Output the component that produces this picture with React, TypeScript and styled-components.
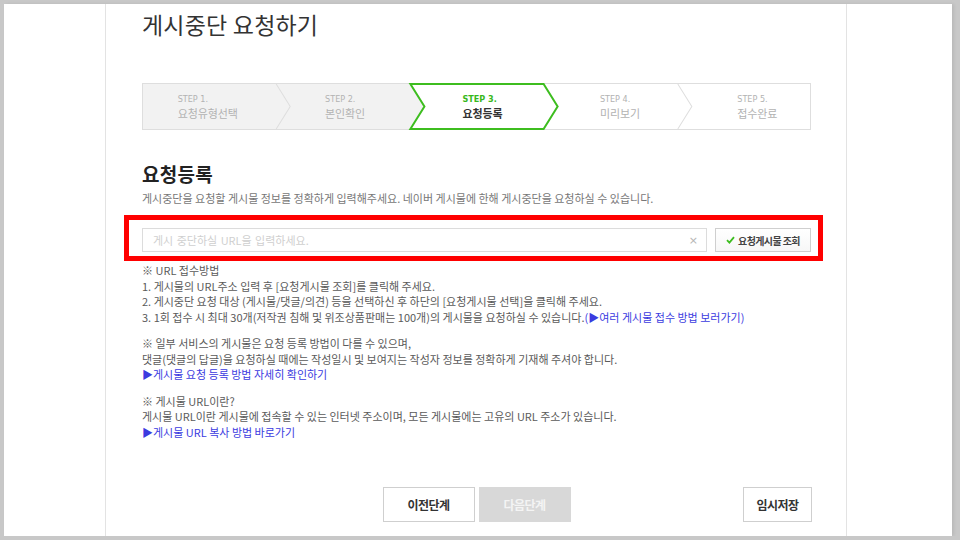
import React from "react";
import styled, { createGlobalStyle } from "styled-components";

const GlobalStyle = createGlobalStyle`
  html, body { margin: 0; padding: 0; }
  body {
    background: #c8c8c8;
    font-family: "Noto Sans CJK KR", "Noto Sans", sans-serif;
    overflow: hidden;
  }
  * { box-sizing: border-box; }
`;

const Frame = styled.div`
  margin: 4px 8px 0 4px;
  height: 532px;
  background: #fff;
  overflow: hidden;
  box-shadow: 2px 0 3px rgba(0, 0, 0, 0.08);
`;

const Column = styled.div`
  margin-left: 101px;
  width: 742px;
  height: 100%;
  border-left: 1px solid #e3e3e3;
  border-right: 1px solid #e3e3e3;
  padding: 6px 35px 0 36px;
  display: flex;
  flex-direction: column;
`;

const Title = styled.h1`
  margin: 0;
  font-size: 23px;
  line-height: 28px;
  font-weight: 400;
  color: #333;
  letter-spacing: 0.2px;
`;

const StepBar = styled.div`
  position: relative;
  margin-top: 45px;
  height: 47px;
  display: flex;
`;

const StepArt = styled.svg`
  position: absolute;
  inset: 0;
  width: 100%;
  height: 100%;
  overflow: visible;
`;

const Step = styled.div<{ $first?: boolean }>`
  position: relative;
  flex: 1;
  display: flex;
  align-items: center;
  justify-content: center;
  padding-left: ${(p) => (p.$first ? "12px" : "30px")};
`;

const StepText = styled.div`
  display: flex;
  flex-direction: column;
  align-items: flex-start;
`;

const StepNum = styled.span<{ $active?: boolean }>`
  font-family: "Liberation Sans Narrow", "DejaVu Sans Condensed", "Roboto", sans-serif;
  font-stretch: condensed;
  font-size: 9px;
  line-height: 12px;
  font-weight: ${(p) => (p.$active ? 700 : 400)};
  color: ${(p) => (p.$active ? "#38b81c" : "#b2b2b2")};
`;

const StepLabel = styled.span<{ $active?: boolean }>`
  font-size: 11px;
  line-height: 16px;
  letter-spacing: -0.1px;
  font-weight: ${(p) => (p.$active ? 700 : 400)};
  color: ${(p) => (p.$active ? "#333" : "#b2b2b2")};
`;

const Heading = styled.h2`
  margin: 32px 0 0;
  font-size: 19px;
  line-height: 24px;
  font-weight: 700;
  color: #222;
  letter-spacing: 0.3px;
`;

const Desc = styled.p`
  margin: 4px 0 0;
  font-size: 11px;
  line-height: 16px;
  color: #777;
  letter-spacing: 0;
`;

const Highlight = styled.div`
  margin: 9px -12px 0 -18px;
  border: 5px solid #ff0000;
  padding: 8px 7px 4px 13px;
  display: flex;
  gap: 8px;
`;

const InputBox = styled.div`
  flex: 1;
  height: 24px;
  border: 1px solid #dcdcdc;
  display: flex;
  align-items: center;
  padding: 0 8px 0 10px;
`;

const Placeholder = styled.span`
  flex: 1;
  font-size: 11px;
  color: #cfcfcf;
  letter-spacing: 0;
  word-spacing: 1px;
`;

const Clear = styled.span`
  font-family: "DejaVu Sans", sans-serif;
  font-size: 11px;
  color: #b5b5b5;
`;

const SearchButton = styled.button`
  width: 96px;
  height: 24px;
  border: 1px solid #cfcfcf;
  background: linear-gradient(#fff, #f7f7f7);
  display: flex;
  align-items: center;
  justify-content: center;
  gap: 3px;
  padding: 0;
  font-family: "Noto Sans CJK KR", sans-serif;
  font-size: 10px;
  font-weight: 700;
  letter-spacing: -0.6px;
  color: #444;
`;

const Info = styled.div`
  margin-top: 2px;
  display: flex;
  flex-direction: column;
  gap: 11px;
`;

const Para = styled.p`
  margin: 0;
  font-size: 11px;
  line-height: 15.5px;
  color: #5a5a5a;
  letter-spacing: 0;
`;

const Line = styled.span`
  display: block;
  white-space: nowrap;
`;

const Link = styled.a`
  color: #3b3bdf;
  text-decoration: none;
`;

const Footer = styled.div`
  margin-top: auto;
  margin-bottom: 14px;
  display: grid;
  grid-template-columns: 1fr auto 1fr;
  align-items: center;
`;

const Center = styled.div`
  grid-column: 2;
  display: flex;
  gap: 4px;
`;

const Btn = styled.button<{ $variant?: "primary" | "disabled" }>`
  width: ${(p) => (p.$variant === "primary" ? "69px" : "92px")};
  height: 35px;
  padding: 0;
  font-family: "Noto Sans CJK KR", sans-serif;
  font-size: 12px;
  font-weight: 700;
  letter-spacing: -0.5px;
  border: 1px solid ${(p) => (p.$variant === "disabled" ? "#d8d8d8" : "#cfcfcf")};
  background: ${(p) => (p.$variant === "disabled" ? "#d8d8d8" : "#fff")};
  color: ${(p) => (p.$variant === "disabled" ? "#f4f4f4" : "#333")};
`;

const Right = styled.div`
  grid-column: 3;
  justify-self: end;
  margin-right: -1px;
`;

const steps = [
  { num: "STEP 1.", label: "요청유형선택" },
  { num: "STEP 2.", label: "본인확인" },
  { num: "STEP 3.", label: "요청등록", active: true },
  { num: "STEP 4.", label: "미리보기" },
  { num: "STEP 5.", label: "접수완료" },
];

function StepBackground() {
  const w = 668;
  const h = 47;
  const m = h / 2;
  return (
    <StepArt viewBox={`0 0 ${w} ${h}`} preserveAspectRatio="none">
      <rect x="0.5" y="0.5" width={w - 1} height={h - 1} fill="#fff" stroke="#dedede" />
      <polygon points={`1,1 267,1 281,${m} 267,${h - 1} 1,${h - 1}`} fill="#f2f2f2" />
      <polyline points={`134,1 148,${m} 134,${h - 1}`} fill="none" stroke="#dedede" />
      <polyline points={`535,1 549,${m} 535,${h - 1}`} fill="none" stroke="#dedede" />
      <polygon
        points={`268,1 401,1 415,${m} 401,${h - 1} 268,${h - 1} 282,${m}`}
        fill="#fff"
        stroke="#3dbd1f"
        strokeWidth="2"
        strokeLinejoin="miter"
      />
    </StepArt>
  );
}

function CheckIcon() {
  return (
    <svg width="9" height="8" viewBox="0 0 9 8">
      <path d="M1 4.2 L3.4 6.6 L8 1.2" fill="none" stroke="#3dbd1f" strokeWidth="1.8" />
    </svg>
  );
}

export default function App() {
  return (
    <>
      <GlobalStyle />
      <Frame>
        <Column>
          <Title>게시중단 요청하기</Title>
          <StepBar>
            <StepBackground />
            {steps.map((s, i) => (
              <Step key={s.num} $first={i === 0}>
                <StepText>
                  <StepNum $active={s.active}>{s.num}</StepNum>
                  <StepLabel $active={s.active}>{s.label}</StepLabel>
                </StepText>
              </Step>
            ))}
          </StepBar>
          <Heading>요청등록</Heading>
          <Desc>
            게시중단을 요청할 게시물 정보를 정확하게 입력해주세요. 네이버 게시물에 한해 게시중단을 요청하실 수 있습니다.
          </Desc>
          <Highlight>
            <InputBox>
              <Placeholder>게시 중단하실 URL을 입력하세요.</Placeholder>
              <Clear>×</Clear>
            </InputBox>
            <SearchButton>
              <CheckIcon />
              요청게시물 조회
            </SearchButton>
          </Highlight>
          <Info>
            <Para>
              <Line>※ URL 접수방법</Line>
              <Line>1. 게시물의 URL주소 입력 후 [요청게시물 조회]를 클릭해 주세요.</Line>
              <Line>2. 게시중단 요청 대상 (게시물/댓글/의견) 등을 선택하신 후 하단의 [요청게시물 선택]을 클릭해 주세요.</Line>
              <Line>
                3. 1회 접수 시 최대 30개(저작권 침해 및 위조상품판매는 100개)의 게시물을 요청하실 수 있습니다.
                <Link href="#">(▶여러 게시물 접수 방법 보러가기)</Link>
              </Line>
            </Para>
            <Para>
              <Line>※ 일부 서비스의 게시물은 요청 등록 방법이 다를 수 있으며,</Line>
              <Line>댓글(댓글의 답글)을 요청하실 때에는 작성일시 및 보여지는 작성자 정보를 정확하게 기재해 주셔야 합니다.</Line>
              <Line>
                <Link href="#">▶게시물 요청 등록 방법 자세히 확인하기</Link>
              </Line>
            </Para>
            <Para>
              <Line>※ 게시물 URL이란?</Line>
              <Line>게시물 URL이란 게시물에 접속할 수 있는 인터넷 주소이며, 모든 게시물에는 고유의 URL 주소가 있습니다.</Line>
              <Line>
                <Link href="#">▶게시물 URL 복사 방법 바로가기</Link>
              </Line>
            </Para>
          </Info>
          <Footer>
            <Center>
              <Btn>이전단계</Btn>
              <Btn $variant="disabled">다음단계</Btn>
            </Center>
            <Right>
              <Btn $variant="primary">임시저장</Btn>
            </Right>
          </Footer>
        </Column>
      </Frame>
    </>
  );
}
